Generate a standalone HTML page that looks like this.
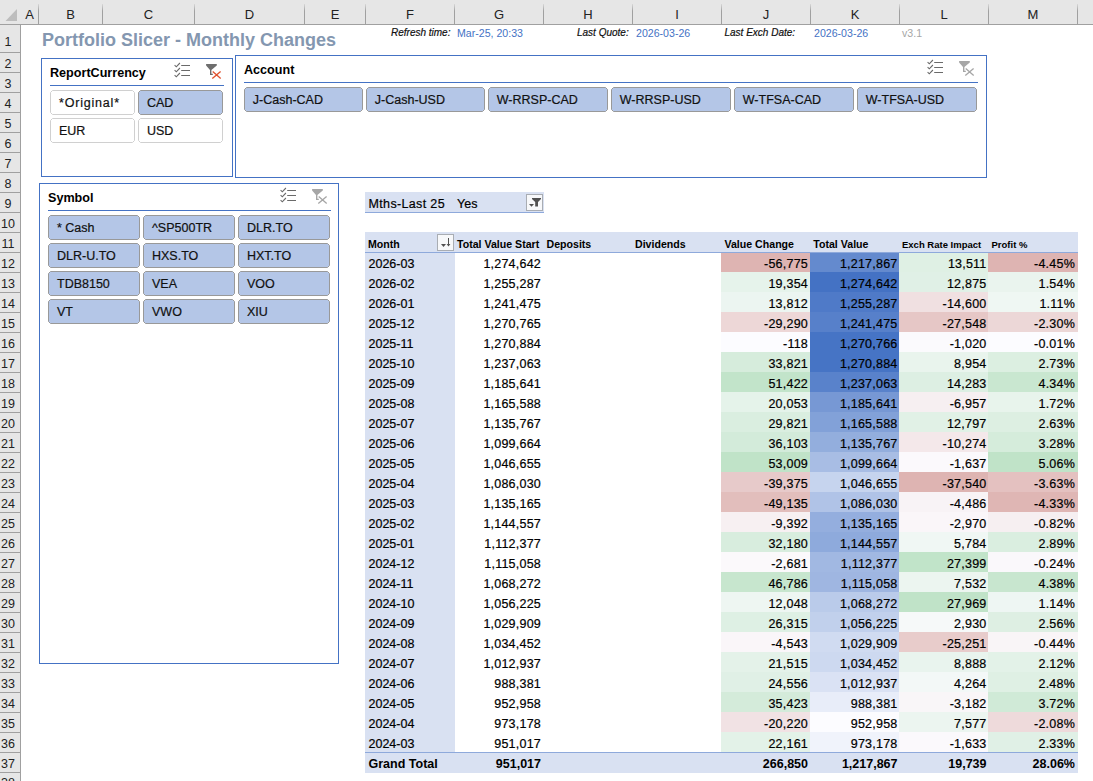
<!DOCTYPE html>
<html><head><meta charset="utf-8"><style>
html,body{margin:0;padding:0;}
body{width:1093px;height:781px;position:relative;overflow:hidden;background:#fff;font-family:"Liberation Sans", sans-serif;}
.t{position:absolute;white-space:nowrap;font-family:"Liberation Sans", sans-serif;}
.n{letter-spacing:0.22px;-webkit-text-stroke:0.2px currentColor;}
.s{-webkit-text-stroke:0.2px currentColor;}
</style></head><body>
<div style="position:absolute;left:0px;top:0px;width:1093px;height:24px;background:#E6E6E6"></div><div style="position:absolute;left:0px;top:24px;width:20px;height:757px;background:#E6E6E6"></div><div style="position:absolute;left:0px;top:24px;width:1093px;height:1px;background:#A0A0A0"></div><div style="position:absolute;left:20px;top:24px;width:1px;height:757px;background:#A0A0A0"></div><svg style="position:absolute;left:0;top:0" width="20" height="24"><polygon points="17,9 17,21 5.5,21" fill="#BDBDBD"/></svg><div style="position:absolute;left:38px;top:4px;width:1px;height:20px;background:linear-gradient(to bottom, #D8D8D8, #A0A0A0 35%)"></div><div style="position:absolute;left:102px;top:4px;width:1px;height:20px;background:linear-gradient(to bottom, #D8D8D8, #A0A0A0 35%)"></div><div style="position:absolute;left:194px;top:4px;width:1px;height:20px;background:linear-gradient(to bottom, #D8D8D8, #A0A0A0 35%)"></div><div style="position:absolute;left:304px;top:4px;width:1px;height:20px;background:linear-gradient(to bottom, #D8D8D8, #A0A0A0 35%)"></div><div style="position:absolute;left:365px;top:4px;width:1px;height:20px;background:linear-gradient(to bottom, #D8D8D8, #A0A0A0 35%)"></div><div style="position:absolute;left:454px;top:4px;width:1px;height:20px;background:linear-gradient(to bottom, #D8D8D8, #A0A0A0 35%)"></div><div style="position:absolute;left:543px;top:4px;width:1px;height:20px;background:linear-gradient(to bottom, #D8D8D8, #A0A0A0 35%)"></div><div style="position:absolute;left:632px;top:4px;width:1px;height:20px;background:linear-gradient(to bottom, #D8D8D8, #A0A0A0 35%)"></div><div style="position:absolute;left:721px;top:4px;width:1px;height:20px;background:linear-gradient(to bottom, #D8D8D8, #A0A0A0 35%)"></div><div style="position:absolute;left:810px;top:4px;width:1px;height:20px;background:linear-gradient(to bottom, #D8D8D8, #A0A0A0 35%)"></div><div style="position:absolute;left:899px;top:4px;width:1px;height:20px;background:linear-gradient(to bottom, #D8D8D8, #A0A0A0 35%)"></div><div style="position:absolute;left:988px;top:4px;width:1px;height:20px;background:linear-gradient(to bottom, #D8D8D8, #A0A0A0 35%)"></div><div style="position:absolute;left:1077px;top:4px;width:1px;height:20px;background:linear-gradient(to bottom, #D8D8D8, #A0A0A0 35%)"></div><div class="t" style="left:21px;width:17px;top:8.00px;font-size:13px;line-height:13px;text-align:center;color:#222">A</div><div class="t" style="left:39px;width:63px;top:8.00px;font-size:13px;line-height:13px;text-align:center;color:#222">B</div><div class="t" style="left:103px;width:91px;top:8.00px;font-size:13px;line-height:13px;text-align:center;color:#222">C</div><div class="t" style="left:195px;width:109px;top:8.00px;font-size:13px;line-height:13px;text-align:center;color:#222">D</div><div class="t" style="left:305px;width:60px;top:8.00px;font-size:13px;line-height:13px;text-align:center;color:#222">E</div><div class="t" style="left:366px;width:88px;top:8.00px;font-size:13px;line-height:13px;text-align:center;color:#222">F</div><div class="t" style="left:455px;width:88px;top:8.00px;font-size:13px;line-height:13px;text-align:center;color:#222">G</div><div class="t" style="left:544px;width:88px;top:8.00px;font-size:13px;line-height:13px;text-align:center;color:#222">H</div><div class="t" style="left:633px;width:88px;top:8.00px;font-size:13px;line-height:13px;text-align:center;color:#222">I</div><div class="t" style="left:722px;width:88px;top:8.00px;font-size:13px;line-height:13px;text-align:center;color:#222">J</div><div class="t" style="left:811px;width:88px;top:8.00px;font-size:13px;line-height:13px;text-align:center;color:#222">K</div><div class="t" style="left:900px;width:88px;top:8.00px;font-size:13px;line-height:13px;text-align:center;color:#222">L</div><div class="t" style="left:989px;width:88px;top:8.00px;font-size:13px;line-height:13px;text-align:center;color:#222">M</div><div style="position:absolute;left:0px;top:52px;width:20px;height:1px;background:#A0A0A0"></div><div style="position:absolute;left:0px;top:72px;width:20px;height:1px;background:#A0A0A0"></div><div style="position:absolute;left:0px;top:92px;width:20px;height:1px;background:#A0A0A0"></div><div style="position:absolute;left:0px;top:112px;width:20px;height:1px;background:#A0A0A0"></div><div style="position:absolute;left:0px;top:132px;width:20px;height:1px;background:#A0A0A0"></div><div style="position:absolute;left:0px;top:152px;width:20px;height:1px;background:#A0A0A0"></div><div style="position:absolute;left:0px;top:172px;width:20px;height:1px;background:#A0A0A0"></div><div style="position:absolute;left:0px;top:192px;width:20px;height:1px;background:#A0A0A0"></div><div style="position:absolute;left:0px;top:212px;width:20px;height:1px;background:#A0A0A0"></div><div style="position:absolute;left:0px;top:232px;width:20px;height:1px;background:#A0A0A0"></div><div style="position:absolute;left:0px;top:252px;width:20px;height:1px;background:#A0A0A0"></div><div style="position:absolute;left:0px;top:272px;width:20px;height:1px;background:#A0A0A0"></div><div style="position:absolute;left:0px;top:292px;width:20px;height:1px;background:#A0A0A0"></div><div style="position:absolute;left:0px;top:312px;width:20px;height:1px;background:#A0A0A0"></div><div style="position:absolute;left:0px;top:332px;width:20px;height:1px;background:#A0A0A0"></div><div style="position:absolute;left:0px;top:352px;width:20px;height:1px;background:#A0A0A0"></div><div style="position:absolute;left:0px;top:372px;width:20px;height:1px;background:#A0A0A0"></div><div style="position:absolute;left:0px;top:392px;width:20px;height:1px;background:#A0A0A0"></div><div style="position:absolute;left:0px;top:412px;width:20px;height:1px;background:#A0A0A0"></div><div style="position:absolute;left:0px;top:432px;width:20px;height:1px;background:#A0A0A0"></div><div style="position:absolute;left:0px;top:452px;width:20px;height:1px;background:#A0A0A0"></div><div style="position:absolute;left:0px;top:472px;width:20px;height:1px;background:#A0A0A0"></div><div style="position:absolute;left:0px;top:492px;width:20px;height:1px;background:#A0A0A0"></div><div style="position:absolute;left:0px;top:512px;width:20px;height:1px;background:#A0A0A0"></div><div style="position:absolute;left:0px;top:532px;width:20px;height:1px;background:#A0A0A0"></div><div style="position:absolute;left:0px;top:552px;width:20px;height:1px;background:#A0A0A0"></div><div style="position:absolute;left:0px;top:572px;width:20px;height:1px;background:#A0A0A0"></div><div style="position:absolute;left:0px;top:592px;width:20px;height:1px;background:#A0A0A0"></div><div style="position:absolute;left:0px;top:612px;width:20px;height:1px;background:#A0A0A0"></div><div style="position:absolute;left:0px;top:632px;width:20px;height:1px;background:#A0A0A0"></div><div style="position:absolute;left:0px;top:652px;width:20px;height:1px;background:#A0A0A0"></div><div style="position:absolute;left:0px;top:672px;width:20px;height:1px;background:#A0A0A0"></div><div style="position:absolute;left:0px;top:692px;width:20px;height:1px;background:#A0A0A0"></div><div style="position:absolute;left:0px;top:712px;width:20px;height:1px;background:#A0A0A0"></div><div style="position:absolute;left:0px;top:732px;width:20px;height:1px;background:#A0A0A0"></div><div style="position:absolute;left:0px;top:752px;width:20px;height:1px;background:#A0A0A0"></div><div style="position:absolute;left:0px;top:772px;width:20px;height:1px;background:#A0A0A0"></div><div class="t" style="left:0px;width:16px;top:35.92px;font-size:12.5px;line-height:12.5px;text-align:center;color:#222">1</div><div class="t" style="left:0px;width:16px;top:58.42px;font-size:12.5px;line-height:12.5px;text-align:center;color:#222">2</div><div class="t" style="left:0px;width:16px;top:78.42px;font-size:12.5px;line-height:12.5px;text-align:center;color:#222">3</div><div class="t" style="left:0px;width:16px;top:98.42px;font-size:12.5px;line-height:12.5px;text-align:center;color:#222">4</div><div class="t" style="left:0px;width:16px;top:118.42px;font-size:12.5px;line-height:12.5px;text-align:center;color:#222">5</div><div class="t" style="left:0px;width:16px;top:138.42px;font-size:12.5px;line-height:12.5px;text-align:center;color:#222">6</div><div class="t" style="left:0px;width:16px;top:158.42px;font-size:12.5px;line-height:12.5px;text-align:center;color:#222">7</div><div class="t" style="left:0px;width:16px;top:178.42px;font-size:12.5px;line-height:12.5px;text-align:center;color:#222">8</div><div class="t" style="left:0px;width:16px;top:198.42px;font-size:12.5px;line-height:12.5px;text-align:center;color:#222">9</div><div class="t" style="left:0px;width:16px;top:218.42px;font-size:12.5px;line-height:12.5px;text-align:center;color:#222">10</div><div class="t" style="left:0px;width:16px;top:238.42px;font-size:12.5px;line-height:12.5px;text-align:center;color:#222">11</div><div class="t" style="left:0px;width:16px;top:258.42px;font-size:12.5px;line-height:12.5px;text-align:center;color:#222">12</div><div class="t" style="left:0px;width:16px;top:278.42px;font-size:12.5px;line-height:12.5px;text-align:center;color:#222">13</div><div class="t" style="left:0px;width:16px;top:298.42px;font-size:12.5px;line-height:12.5px;text-align:center;color:#222">14</div><div class="t" style="left:0px;width:16px;top:318.42px;font-size:12.5px;line-height:12.5px;text-align:center;color:#222">15</div><div class="t" style="left:0px;width:16px;top:338.42px;font-size:12.5px;line-height:12.5px;text-align:center;color:#222">16</div><div class="t" style="left:0px;width:16px;top:358.42px;font-size:12.5px;line-height:12.5px;text-align:center;color:#222">17</div><div class="t" style="left:0px;width:16px;top:378.42px;font-size:12.5px;line-height:12.5px;text-align:center;color:#222">18</div><div class="t" style="left:0px;width:16px;top:398.42px;font-size:12.5px;line-height:12.5px;text-align:center;color:#222">19</div><div class="t" style="left:0px;width:16px;top:418.42px;font-size:12.5px;line-height:12.5px;text-align:center;color:#222">20</div><div class="t" style="left:0px;width:16px;top:438.42px;font-size:12.5px;line-height:12.5px;text-align:center;color:#222">21</div><div class="t" style="left:0px;width:16px;top:458.42px;font-size:12.5px;line-height:12.5px;text-align:center;color:#222">22</div><div class="t" style="left:0px;width:16px;top:478.42px;font-size:12.5px;line-height:12.5px;text-align:center;color:#222">23</div><div class="t" style="left:0px;width:16px;top:498.42px;font-size:12.5px;line-height:12.5px;text-align:center;color:#222">24</div><div class="t" style="left:0px;width:16px;top:518.42px;font-size:12.5px;line-height:12.5px;text-align:center;color:#222">25</div><div class="t" style="left:0px;width:16px;top:538.42px;font-size:12.5px;line-height:12.5px;text-align:center;color:#222">26</div><div class="t" style="left:0px;width:16px;top:558.42px;font-size:12.5px;line-height:12.5px;text-align:center;color:#222">27</div><div class="t" style="left:0px;width:16px;top:578.42px;font-size:12.5px;line-height:12.5px;text-align:center;color:#222">28</div><div class="t" style="left:0px;width:16px;top:598.42px;font-size:12.5px;line-height:12.5px;text-align:center;color:#222">29</div><div class="t" style="left:0px;width:16px;top:618.42px;font-size:12.5px;line-height:12.5px;text-align:center;color:#222">30</div><div class="t" style="left:0px;width:16px;top:638.42px;font-size:12.5px;line-height:12.5px;text-align:center;color:#222">31</div><div class="t" style="left:0px;width:16px;top:658.42px;font-size:12.5px;line-height:12.5px;text-align:center;color:#222">32</div><div class="t" style="left:0px;width:16px;top:678.42px;font-size:12.5px;line-height:12.5px;text-align:center;color:#222">33</div><div class="t" style="left:0px;width:16px;top:698.42px;font-size:12.5px;line-height:12.5px;text-align:center;color:#222">34</div><div class="t" style="left:0px;width:16px;top:718.42px;font-size:12.5px;line-height:12.5px;text-align:center;color:#222">35</div><div class="t" style="left:0px;width:16px;top:738.42px;font-size:12.5px;line-height:12.5px;text-align:center;color:#222">36</div><div class="t" style="left:0px;width:16px;top:758.42px;font-size:12.5px;line-height:12.5px;text-align:center;color:#222">37</div><div class="t" style="left:0px;width:16px;top:777.42px;font-size:12.5px;line-height:12.5px;text-align:center;color:#222">38</div><div class="t " style="left:42px;top:30.76px;font-size:18px;line-height:18px;font-weight:700;color:#8497B0;">Portfolio Slicer - Monthly Changes</div><div class="t s" style="left:391px;top:28.14px;font-size:10px;line-height:10px;font-weight:400;color:#111;font-style:italic">Refresh time:</div><div class="t " style="left:457px;top:27.63px;font-size:10.6px;line-height:10.6px;font-weight:400;color:#4472C4;">Mar-25, 20:33</div><div class="t s" style="left:577px;top:28.14px;font-size:10px;line-height:10px;font-weight:400;color:#111;font-style:italic">Last Quote:</div><div class="t " style="left:636px;top:27.63px;font-size:10.6px;line-height:10.6px;font-weight:400;color:#4472C4;">2026-03-26</div><div class="t s" style="left:724.5px;top:28.14px;font-size:10px;line-height:10px;font-weight:400;color:#111;font-style:italic">Last Exch Date:</div><div class="t " style="left:814px;top:27.63px;font-size:10.6px;line-height:10.6px;font-weight:400;color:#4472C4;">2026-03-26</div><div class="t " style="left:902px;top:27.63px;font-size:10.6px;line-height:10.6px;font-weight:400;color:#A6A6A6;">v3.1</div><div style="position:absolute;left:41px;top:58px;width:190px;height:117px;border:1px solid #4472C4;box-sizing:content-box"></div><div class="t " style="left:50px;top:66.63px;font-size:12.6px;line-height:12.6px;font-weight:700;color:#000;">ReportCurrency</div><div style="position:absolute;left:50px;top:85px;width:174px;height:1px;background:#4472C4"></div><svg style="position:absolute;left:174px;top:62px" width="17" height="17" viewBox="0 0 17 17"><g fill="none" stroke="#6A6A6A" stroke-width="1.1"><path d="M0.6 3.1 L2.3 4.8 L5.9 1.0"/><path d="M0.6 8.1 L2.3 9.8 L5.9 6.0"/><path d="M0.6 13.1 L2.3 14.8 L5.9 11.0"/></g><path d="M7.2 3.5 H16 M7.2 8.5 H16 M7.2 13.5 H16" stroke="#6A6A6A" stroke-width="1"/></svg><svg style="position:absolute;left:205px;top:63px" width="17" height="17" viewBox="0 0 17 17"><path d="M1.1 1 H11.8 V2.4 L6.4 6.9 V10.8 H7.8 V11.9 H5.0 V6.9 L1.1 2.4 Z" fill="#6E6E6E"/><path d="M7.3 15.6 L15.6 8.4 M7.7 8.6 L15.7 15.6" stroke="#E0522F" stroke-width="1.3" fill="none"/></svg><svg style="position:absolute;left:50px;top:90px" width="85" height="25"><path d="M2.5 0.5 H82.5 L84.5 2.5 V22.5 L82.5 24.5 H2.5 L0.5 22.5 V2.5 Z" fill="#FFFFFF" stroke="#D0D0D0" stroke-width="1"/></svg><div class="t s" style="left:59px;top:96.62px;font-size:12.5px;line-height:12.5px;font-weight:400;color:#111;"><span style="letter-spacing:0.8px">*Original*</span></div><svg style="position:absolute;left:138px;top:90px" width="85" height="25"><path d="M2.5 0.5 H82.5 L84.5 2.5 V22.5 L82.5 24.5 H2.5 L0.5 22.5 V2.5 Z" fill="#B4C6E7" stroke="#999999" stroke-width="1"/></svg><div class="t s" style="left:147px;top:96.62px;font-size:12.5px;line-height:12.5px;font-weight:400;color:#111;">CAD</div><svg style="position:absolute;left:50px;top:118px" width="85" height="25"><path d="M2.5 0.5 H82.5 L84.5 2.5 V22.5 L82.5 24.5 H2.5 L0.5 22.5 V2.5 Z" fill="#FFFFFF" stroke="#D0D0D0" stroke-width="1"/></svg><div class="t s" style="left:59px;top:124.62px;font-size:12.5px;line-height:12.5px;font-weight:400;color:#111;">EUR</div><svg style="position:absolute;left:138px;top:118px" width="85" height="25"><path d="M2.5 0.5 H82.5 L84.5 2.5 V22.5 L82.5 24.5 H2.5 L0.5 22.5 V2.5 Z" fill="#FFFFFF" stroke="#D0D0D0" stroke-width="1"/></svg><div class="t s" style="left:147px;top:124.62px;font-size:12.5px;line-height:12.5px;font-weight:400;color:#111;">USD</div><div style="position:absolute;left:235px;top:55px;width:750px;height:121px;border:1px solid #4472C4;box-sizing:content-box"></div><div class="t " style="left:244px;top:64.33px;font-size:12.6px;line-height:12.6px;font-weight:700;color:#000;">Account</div><div style="position:absolute;left:244px;top:82px;width:734px;height:1px;background:#4472C4"></div><svg style="position:absolute;left:927px;top:59px" width="17" height="17" viewBox="0 0 17 17"><g fill="none" stroke="#6A6A6A" stroke-width="1.1"><path d="M0.6 3.1 L2.3 4.8 L5.9 1.0"/><path d="M0.6 8.1 L2.3 9.8 L5.9 6.0"/><path d="M0.6 13.1 L2.3 14.8 L5.9 11.0"/></g><path d="M7.2 3.5 H16 M7.2 8.5 H16 M7.2 13.5 H16" stroke="#6A6A6A" stroke-width="1"/></svg><svg style="position:absolute;left:958px;top:60px" width="17" height="17" viewBox="0 0 17 17"><path d="M1.1 1 H11.8 V2.4 L6.4 6.9 V10.8 H7.8 V11.9 H5.0 V6.9 L1.1 2.4 Z" fill="#A6A6A6"/><path d="M7.3 15.6 L15.6 8.4 M7.7 8.6 L15.7 15.6" stroke="#A6A6A6" stroke-width="1.3" fill="none"/></svg><svg style="position:absolute;left:244px;top:87px" width="119" height="25"><path d="M2.5 0.5 H116.5 L118.5 2.5 V22.5 L116.5 24.5 H2.5 L0.5 22.5 V2.5 Z" fill="#B4C6E7" stroke="#999999" stroke-width="1"/></svg><div class="t s" style="left:252.8px;top:93.62px;font-size:12.5px;line-height:12.5px;font-weight:400;color:#111;">J-Cash-CAD</div><svg style="position:absolute;left:366px;top:87px" width="119" height="25"><path d="M2.5 0.5 H116.5 L118.5 2.5 V22.5 L116.5 24.5 H2.5 L0.5 22.5 V2.5 Z" fill="#B4C6E7" stroke="#999999" stroke-width="1"/></svg><div class="t s" style="left:374.8px;top:93.62px;font-size:12.5px;line-height:12.5px;font-weight:400;color:#111;">J-Cash-USD</div><svg style="position:absolute;left:488px;top:87px" width="120" height="25"><path d="M2.5 0.5 H117.5 L119.5 2.5 V22.5 L117.5 24.5 H2.5 L0.5 22.5 V2.5 Z" fill="#B4C6E7" stroke="#999999" stroke-width="1"/></svg><div class="t s" style="left:496.8px;top:93.62px;font-size:12.5px;line-height:12.5px;font-weight:400;color:#111;">W-RRSP-CAD</div><svg style="position:absolute;left:611px;top:87px" width="120" height="25"><path d="M2.5 0.5 H117.5 L119.5 2.5 V22.5 L117.5 24.5 H2.5 L0.5 22.5 V2.5 Z" fill="#B4C6E7" stroke="#999999" stroke-width="1"/></svg><div class="t s" style="left:619.8px;top:93.62px;font-size:12.5px;line-height:12.5px;font-weight:400;color:#111;">W-RRSP-USD</div><svg style="position:absolute;left:734px;top:87px" width="120" height="25"><path d="M2.5 0.5 H117.5 L119.5 2.5 V22.5 L117.5 24.5 H2.5 L0.5 22.5 V2.5 Z" fill="#B4C6E7" stroke="#999999" stroke-width="1"/></svg><div class="t s" style="left:742.8px;top:93.62px;font-size:12.5px;line-height:12.5px;font-weight:400;color:#111;">W-TFSA-CAD</div><svg style="position:absolute;left:857px;top:87px" width="120" height="25"><path d="M2.5 0.5 H117.5 L119.5 2.5 V22.5 L117.5 24.5 H2.5 L0.5 22.5 V2.5 Z" fill="#B4C6E7" stroke="#999999" stroke-width="1"/></svg><div class="t s" style="left:865.8px;top:93.62px;font-size:12.5px;line-height:12.5px;font-weight:400;color:#111;">W-TFSA-USD</div><div style="position:absolute;left:39px;top:183px;width:298px;height:479px;border:1px solid #4472C4;box-sizing:content-box"></div><div class="t " style="left:48px;top:191.73px;font-size:12.6px;line-height:12.6px;font-weight:700;color:#000;">Symbol</div><div style="position:absolute;left:48px;top:210px;width:283px;height:1px;background:#4472C4"></div><svg style="position:absolute;left:280px;top:187px" width="17" height="17" viewBox="0 0 17 17"><g fill="none" stroke="#6A6A6A" stroke-width="1.1"><path d="M0.6 3.1 L2.3 4.8 L5.9 1.0"/><path d="M0.6 8.1 L2.3 9.8 L5.9 6.0"/><path d="M0.6 13.1 L2.3 14.8 L5.9 11.0"/></g><path d="M7.2 3.5 H16 M7.2 8.5 H16 M7.2 13.5 H16" stroke="#6A6A6A" stroke-width="1"/></svg><svg style="position:absolute;left:311px;top:188px" width="17" height="17" viewBox="0 0 17 17"><path d="M1.1 1 H11.8 V2.4 L6.4 6.9 V10.8 H7.8 V11.9 H5.0 V6.9 L1.1 2.4 Z" fill="#A6A6A6"/><path d="M7.3 15.6 L15.6 8.4 M7.7 8.6 L15.7 15.6" stroke="#A6A6A6" stroke-width="1.3" fill="none"/></svg><svg style="position:absolute;left:48px;top:215px" width="92" height="25"><path d="M2.5 0.5 H89.5 L91.5 2.5 V22.5 L89.5 24.5 H2.5 L0.5 22.5 V2.5 Z" fill="#B4C6E7" stroke="#999999" stroke-width="1"/></svg><div class="t s" style="left:57px;top:221.62px;font-size:12.5px;line-height:12.5px;font-weight:400;color:#111;">* Cash</div><svg style="position:absolute;left:143px;top:215px" width="92" height="25"><path d="M2.5 0.5 H89.5 L91.5 2.5 V22.5 L89.5 24.5 H2.5 L0.5 22.5 V2.5 Z" fill="#B4C6E7" stroke="#999999" stroke-width="1"/></svg><div class="t s" style="left:152px;top:221.62px;font-size:12.5px;line-height:12.5px;font-weight:400;color:#111;">^SP500TR</div><svg style="position:absolute;left:238px;top:215px" width="92" height="25"><path d="M2.5 0.5 H89.5 L91.5 2.5 V22.5 L89.5 24.5 H2.5 L0.5 22.5 V2.5 Z" fill="#B4C6E7" stroke="#999999" stroke-width="1"/></svg><div class="t s" style="left:247px;top:221.62px;font-size:12.5px;line-height:12.5px;font-weight:400;color:#111;">DLR.TO</div><svg style="position:absolute;left:48px;top:243px" width="92" height="25"><path d="M2.5 0.5 H89.5 L91.5 2.5 V22.5 L89.5 24.5 H2.5 L0.5 22.5 V2.5 Z" fill="#B4C6E7" stroke="#999999" stroke-width="1"/></svg><div class="t s" style="left:57px;top:249.62px;font-size:12.5px;line-height:12.5px;font-weight:400;color:#111;">DLR-U.TO</div><svg style="position:absolute;left:143px;top:243px" width="92" height="25"><path d="M2.5 0.5 H89.5 L91.5 2.5 V22.5 L89.5 24.5 H2.5 L0.5 22.5 V2.5 Z" fill="#B4C6E7" stroke="#999999" stroke-width="1"/></svg><div class="t s" style="left:152px;top:249.62px;font-size:12.5px;line-height:12.5px;font-weight:400;color:#111;">HXS.TO</div><svg style="position:absolute;left:238px;top:243px" width="92" height="25"><path d="M2.5 0.5 H89.5 L91.5 2.5 V22.5 L89.5 24.5 H2.5 L0.5 22.5 V2.5 Z" fill="#B4C6E7" stroke="#999999" stroke-width="1"/></svg><div class="t s" style="left:247px;top:249.62px;font-size:12.5px;line-height:12.5px;font-weight:400;color:#111;">HXT.TO</div><svg style="position:absolute;left:48px;top:271px" width="92" height="25"><path d="M2.5 0.5 H89.5 L91.5 2.5 V22.5 L89.5 24.5 H2.5 L0.5 22.5 V2.5 Z" fill="#B4C6E7" stroke="#999999" stroke-width="1"/></svg><div class="t s" style="left:57px;top:277.62px;font-size:12.5px;line-height:12.5px;font-weight:400;color:#111;">TDB8150</div><svg style="position:absolute;left:143px;top:271px" width="92" height="25"><path d="M2.5 0.5 H89.5 L91.5 2.5 V22.5 L89.5 24.5 H2.5 L0.5 22.5 V2.5 Z" fill="#B4C6E7" stroke="#999999" stroke-width="1"/></svg><div class="t s" style="left:152px;top:277.62px;font-size:12.5px;line-height:12.5px;font-weight:400;color:#111;">VEA</div><svg style="position:absolute;left:238px;top:271px" width="92" height="25"><path d="M2.5 0.5 H89.5 L91.5 2.5 V22.5 L89.5 24.5 H2.5 L0.5 22.5 V2.5 Z" fill="#B4C6E7" stroke="#999999" stroke-width="1"/></svg><div class="t s" style="left:247px;top:277.62px;font-size:12.5px;line-height:12.5px;font-weight:400;color:#111;">VOO</div><svg style="position:absolute;left:48px;top:299px" width="92" height="25"><path d="M2.5 0.5 H89.5 L91.5 2.5 V22.5 L89.5 24.5 H2.5 L0.5 22.5 V2.5 Z" fill="#B4C6E7" stroke="#999999" stroke-width="1"/></svg><div class="t s" style="left:57px;top:305.62px;font-size:12.5px;line-height:12.5px;font-weight:400;color:#111;">VT</div><svg style="position:absolute;left:143px;top:299px" width="92" height="25"><path d="M2.5 0.5 H89.5 L91.5 2.5 V22.5 L89.5 24.5 H2.5 L0.5 22.5 V2.5 Z" fill="#B4C6E7" stroke="#999999" stroke-width="1"/></svg><div class="t s" style="left:152px;top:305.62px;font-size:12.5px;line-height:12.5px;font-weight:400;color:#111;">VWO</div><svg style="position:absolute;left:238px;top:299px" width="92" height="25"><path d="M2.5 0.5 H89.5 L91.5 2.5 V22.5 L89.5 24.5 H2.5 L0.5 22.5 V2.5 Z" fill="#B4C6E7" stroke="#999999" stroke-width="1"/></svg><div class="t s" style="left:247px;top:305.62px;font-size:12.5px;line-height:12.5px;font-weight:400;color:#111;">XIU</div><div style="position:absolute;left:365px;top:192px;width:179px;height:20px;background:#D9E1F2"></div><div style="position:absolute;left:365px;top:212px;width:179px;height:1px;background:#8EA9DB"></div><div class="t s" style="left:368.5px;top:198.22px;font-size:12.5px;line-height:12.5px;font-weight:400;color:#000;letter-spacing:0.35px">Mths-Last 25</div><div class="t s" style="left:457px;top:198.22px;font-size:12.5px;line-height:12.5px;font-weight:400;color:#000;">Yes</div><svg style="position:absolute;left:526px;top:194px" width="17" height="17" viewBox="0 0 17 17"><rect x="0.5" y="0.5" width="16" height="16" fill="#F7F8FA" stroke="#A9ADB3"/><path d="M3 10 H8 L5.5 12.8 Z" fill="#505050"/><path d="M6 4 H15 V5 L12 8 V12.5 H9.2 V8 L6 5 Z" fill="#505050"/></svg><div style="position:absolute;left:365px;top:232px;width:713px;height:20px;background:#D9E1F2"></div><div style="position:absolute;left:365px;top:252px;width:713px;height:1px;background:#8EA9DB"></div><svg style="position:absolute;left:437px;top:234px" width="17" height="17" viewBox="0 0 17 17"><rect x="0.5" y="0.5" width="16" height="16" fill="#F7F8FA" stroke="#A9ADB3"/><path d="M4 10 H9 L6.5 13 Z" fill="#505050"/><path d="M11.5 4 V11" stroke="#505050" stroke-width="1"/><path d="M9.6 10 H13.4 L11.5 12.5 Z" fill="#505050"/></svg><div class="t " style="left:368px;top:239.23px;font-size:10.6px;line-height:10.6px;font-weight:700;color:#000;">Month</div><div class="t " style="left:457px;top:239.23px;font-size:10.6px;line-height:10.6px;font-weight:700;color:#000;">Total Value Start</div><div class="t " style="left:546.5px;top:239.23px;font-size:10.6px;line-height:10.6px;font-weight:700;color:#000;">Deposits</div><div class="t " style="left:635px;top:239.23px;font-size:10.6px;line-height:10.6px;font-weight:700;color:#000;">Dividends</div><div class="t " style="left:724.5px;top:239.23px;font-size:10.6px;line-height:10.6px;font-weight:700;color:#000;">Value Change</div><div class="t " style="left:813.3px;top:239.23px;font-size:10.6px;line-height:10.6px;font-weight:700;color:#000;">Total Value</div><div class="t " style="left:902px;top:240.36px;font-size:9.5px;line-height:9.5px;font-weight:700;color:#000;">Exch Rate Impact</div><div class="t " style="left:991.5px;top:240.36px;font-size:9.5px;line-height:9.5px;font-weight:700;color:#000;">Profit %</div><div style="position:absolute;left:365px;top:253px;width:90px;height:19px;background:#D9E1F2"></div><div style="position:absolute;left:721px;top:253px;width:89px;height:19px;background:#DEB4B2"></div><div style="position:absolute;left:810px;top:253px;width:89px;height:19px;background:#648ACE"></div><div style="position:absolute;left:899px;top:253px;width:89px;height:19px;background:#DFF0E4"></div><div style="position:absolute;left:988px;top:253px;width:90px;height:19px;background:#DEB4B2"></div><div class="t s" style="left:368.5px;top:258.22px;font-size:12.5px;line-height:12.5px;font-weight:400;color:#000;">2026-03</div><div class="t n" style="right:552px;top:258.22px;font-size:12.5px;line-height:12.5px;font-weight:400;color:#000;text-align:right;">1,274,642</div><div class="t n" style="right:285px;top:258.22px;font-size:12.5px;line-height:12.5px;font-weight:400;color:#000;text-align:right;">-56,775</div><div class="t n" style="right:195.5px;top:258.22px;font-size:12.5px;line-height:12.5px;font-weight:400;color:#000;text-align:right;">1,217,867</div><div class="t n" style="right:106.5px;top:258.22px;font-size:12.5px;line-height:12.5px;font-weight:400;color:#000;text-align:right;">13,511</div><div class="t n" style="right:18px;top:258.22px;font-size:12.5px;line-height:12.5px;font-weight:400;color:#000;text-align:right;">-4.45%</div><div style="position:absolute;left:365px;top:272px;width:90px;height:20px;background:#D9E1F2"></div><div style="position:absolute;left:721px;top:272px;width:89px;height:20px;background:#E6F3EB"></div><div style="position:absolute;left:810px;top:272px;width:89px;height:20px;background:#4472C4"></div><div style="position:absolute;left:899px;top:272px;width:89px;height:20px;background:#E0F0E6"></div><div style="position:absolute;left:988px;top:272px;width:90px;height:20px;background:#EAF4EE"></div><div class="t s" style="left:368.5px;top:278.22px;font-size:12.5px;line-height:12.5px;font-weight:400;color:#000;">2026-02</div><div class="t n" style="right:552px;top:278.22px;font-size:12.5px;line-height:12.5px;font-weight:400;color:#000;text-align:right;">1,255,287</div><div class="t n" style="right:285px;top:278.22px;font-size:12.5px;line-height:12.5px;font-weight:400;color:#000;text-align:right;">19,354</div><div class="t n" style="right:195.5px;top:278.22px;font-size:12.5px;line-height:12.5px;font-weight:400;color:#000;text-align:right;">1,274,642</div><div class="t n" style="right:106.5px;top:278.22px;font-size:12.5px;line-height:12.5px;font-weight:400;color:#000;text-align:right;">12,875</div><div class="t n" style="right:18px;top:278.22px;font-size:12.5px;line-height:12.5px;font-weight:400;color:#000;text-align:right;">1.54%</div><div style="position:absolute;left:365px;top:292px;width:90px;height:20px;background:#D9E1F2"></div><div style="position:absolute;left:721px;top:292px;width:89px;height:20px;background:#ECF5F1"></div><div style="position:absolute;left:810px;top:292px;width:89px;height:20px;background:#4F7AC8"></div><div style="position:absolute;left:899px;top:292px;width:89px;height:20px;background:#F0E0E1"></div><div style="position:absolute;left:988px;top:292px;width:90px;height:20px;background:#EFF7F3"></div><div class="t s" style="left:368.5px;top:298.22px;font-size:12.5px;line-height:12.5px;font-weight:400;color:#000;">2026-01</div><div class="t n" style="right:552px;top:298.22px;font-size:12.5px;line-height:12.5px;font-weight:400;color:#000;text-align:right;">1,241,475</div><div class="t n" style="right:285px;top:298.22px;font-size:12.5px;line-height:12.5px;font-weight:400;color:#000;text-align:right;">13,812</div><div class="t n" style="right:195.5px;top:298.22px;font-size:12.5px;line-height:12.5px;font-weight:400;color:#000;text-align:right;">1,255,287</div><div class="t n" style="right:106.5px;top:298.22px;font-size:12.5px;line-height:12.5px;font-weight:400;color:#000;text-align:right;">-14,600</div><div class="t n" style="right:18px;top:298.22px;font-size:12.5px;line-height:12.5px;font-weight:400;color:#000;text-align:right;">1.11%</div><div style="position:absolute;left:365px;top:312px;width:90px;height:20px;background:#D9E1F2"></div><div style="position:absolute;left:721px;top:312px;width:89px;height:20px;background:#EDD7D7"></div><div style="position:absolute;left:810px;top:312px;width:89px;height:20px;background:#5780CA"></div><div style="position:absolute;left:899px;top:312px;width:89px;height:20px;background:#E6C7C6"></div><div style="position:absolute;left:988px;top:312px;width:90px;height:20px;background:#ECD7D7"></div><div class="t s" style="left:368.5px;top:318.22px;font-size:12.5px;line-height:12.5px;font-weight:400;color:#000;">2025-12</div><div class="t n" style="right:552px;top:318.22px;font-size:12.5px;line-height:12.5px;font-weight:400;color:#000;text-align:right;">1,270,765</div><div class="t n" style="right:285px;top:318.22px;font-size:12.5px;line-height:12.5px;font-weight:400;color:#000;text-align:right;">-29,290</div><div class="t n" style="right:195.5px;top:318.22px;font-size:12.5px;line-height:12.5px;font-weight:400;color:#000;text-align:right;">1,241,475</div><div class="t n" style="right:106.5px;top:318.22px;font-size:12.5px;line-height:12.5px;font-weight:400;color:#000;text-align:right;">-27,548</div><div class="t n" style="right:18px;top:318.22px;font-size:12.5px;line-height:12.5px;font-weight:400;color:#000;text-align:right;">-2.30%</div><div style="position:absolute;left:365px;top:332px;width:90px;height:20px;background:#D9E1F2"></div><div style="position:absolute;left:721px;top:332px;width:89px;height:20px;background:#FCFCFF"></div><div style="position:absolute;left:810px;top:332px;width:89px;height:20px;background:#4674C5"></div><div style="position:absolute;left:899px;top:332px;width:89px;height:20px;background:#FBFAFD"></div><div style="position:absolute;left:988px;top:332px;width:90px;height:20px;background:#FCFCFF"></div><div class="t s" style="left:368.5px;top:338.22px;font-size:12.5px;line-height:12.5px;font-weight:400;color:#000;">2025-11</div><div class="t n" style="right:552px;top:338.22px;font-size:12.5px;line-height:12.5px;font-weight:400;color:#000;text-align:right;">1,270,884</div><div class="t n" style="right:285px;top:338.22px;font-size:12.5px;line-height:12.5px;font-weight:400;color:#000;text-align:right;">-118</div><div class="t n" style="right:195.5px;top:338.22px;font-size:12.5px;line-height:12.5px;font-weight:400;color:#000;text-align:right;">1,270,766</div><div class="t n" style="right:106.5px;top:338.22px;font-size:12.5px;line-height:12.5px;font-weight:400;color:#000;text-align:right;">-1,020</div><div class="t n" style="right:18px;top:338.22px;font-size:12.5px;line-height:12.5px;font-weight:400;color:#000;text-align:right;">-0.01%</div><div style="position:absolute;left:365px;top:352px;width:90px;height:20px;background:#D9E1F2"></div><div style="position:absolute;left:721px;top:352px;width:89px;height:20px;background:#D6ECDC"></div><div style="position:absolute;left:810px;top:352px;width:89px;height:20px;background:#4674C5"></div><div style="position:absolute;left:899px;top:352px;width:89px;height:20px;background:#E9F4ED"></div><div style="position:absolute;left:988px;top:352px;width:90px;height:20px;background:#DCEFE1"></div><div class="t s" style="left:368.5px;top:358.22px;font-size:12.5px;line-height:12.5px;font-weight:400;color:#000;">2025-10</div><div class="t n" style="right:552px;top:358.22px;font-size:12.5px;line-height:12.5px;font-weight:400;color:#000;text-align:right;">1,237,063</div><div class="t n" style="right:285px;top:358.22px;font-size:12.5px;line-height:12.5px;font-weight:400;color:#000;text-align:right;">33,821</div><div class="t n" style="right:195.5px;top:358.22px;font-size:12.5px;line-height:12.5px;font-weight:400;color:#000;text-align:right;">1,270,884</div><div class="t n" style="right:106.5px;top:358.22px;font-size:12.5px;line-height:12.5px;font-weight:400;color:#000;text-align:right;">8,954</div><div class="t n" style="right:18px;top:358.22px;font-size:12.5px;line-height:12.5px;font-weight:400;color:#000;text-align:right;">2.73%</div><div style="position:absolute;left:365px;top:372px;width:90px;height:20px;background:#D9E1F2"></div><div style="position:absolute;left:721px;top:372px;width:89px;height:20px;background:#C2E4CA"></div><div style="position:absolute;left:810px;top:372px;width:89px;height:20px;background:#5982CB"></div><div style="position:absolute;left:899px;top:372px;width:89px;height:20px;background:#DDEFE3"></div><div style="position:absolute;left:988px;top:372px;width:90px;height:20px;background:#C9E7D0"></div><div class="t s" style="left:368.5px;top:378.22px;font-size:12.5px;line-height:12.5px;font-weight:400;color:#000;">2025-09</div><div class="t n" style="right:552px;top:378.22px;font-size:12.5px;line-height:12.5px;font-weight:400;color:#000;text-align:right;">1,185,641</div><div class="t n" style="right:285px;top:378.22px;font-size:12.5px;line-height:12.5px;font-weight:400;color:#000;text-align:right;">51,422</div><div class="t n" style="right:195.5px;top:378.22px;font-size:12.5px;line-height:12.5px;font-weight:400;color:#000;text-align:right;">1,237,063</div><div class="t n" style="right:106.5px;top:378.22px;font-size:12.5px;line-height:12.5px;font-weight:400;color:#000;text-align:right;">14,283</div><div class="t n" style="right:18px;top:378.22px;font-size:12.5px;line-height:12.5px;font-weight:400;color:#000;text-align:right;">4.34%</div><div style="position:absolute;left:365px;top:392px;width:90px;height:20px;background:#D9E1F2"></div><div style="position:absolute;left:721px;top:392px;width:89px;height:20px;background:#E5F3EA"></div><div style="position:absolute;left:810px;top:392px;width:89px;height:20px;background:#7798D4"></div><div style="position:absolute;left:899px;top:392px;width:89px;height:20px;background:#F6EFF1"></div><div style="position:absolute;left:988px;top:392px;width:90px;height:20px;background:#E8F4EC"></div><div class="t s" style="left:368.5px;top:398.22px;font-size:12.5px;line-height:12.5px;font-weight:400;color:#000;">2025-08</div><div class="t n" style="right:552px;top:398.22px;font-size:12.5px;line-height:12.5px;font-weight:400;color:#000;text-align:right;">1,165,588</div><div class="t n" style="right:285px;top:398.22px;font-size:12.5px;line-height:12.5px;font-weight:400;color:#000;text-align:right;">20,053</div><div class="t n" style="right:195.5px;top:398.22px;font-size:12.5px;line-height:12.5px;font-weight:400;color:#000;text-align:right;">1,185,641</div><div class="t n" style="right:106.5px;top:398.22px;font-size:12.5px;line-height:12.5px;font-weight:400;color:#000;text-align:right;">-6,957</div><div class="t n" style="right:18px;top:398.22px;font-size:12.5px;line-height:12.5px;font-weight:400;color:#000;text-align:right;">1.72%</div><div style="position:absolute;left:365px;top:412px;width:90px;height:20px;background:#D9E1F2"></div><div style="position:absolute;left:721px;top:412px;width:89px;height:20px;background:#DAEEE0"></div><div style="position:absolute;left:810px;top:412px;width:89px;height:20px;background:#82A1D8"></div><div style="position:absolute;left:899px;top:412px;width:89px;height:20px;background:#E1F1E6"></div><div style="position:absolute;left:988px;top:412px;width:90px;height:20px;background:#DDEFE2"></div><div class="t s" style="left:368.5px;top:418.22px;font-size:12.5px;line-height:12.5px;font-weight:400;color:#000;">2025-07</div><div class="t n" style="right:552px;top:418.22px;font-size:12.5px;line-height:12.5px;font-weight:400;color:#000;text-align:right;">1,135,767</div><div class="t n" style="right:285px;top:418.22px;font-size:12.5px;line-height:12.5px;font-weight:400;color:#000;text-align:right;">29,821</div><div class="t n" style="right:195.5px;top:418.22px;font-size:12.5px;line-height:12.5px;font-weight:400;color:#000;text-align:right;">1,165,588</div><div class="t n" style="right:106.5px;top:418.22px;font-size:12.5px;line-height:12.5px;font-weight:400;color:#000;text-align:right;">12,797</div><div class="t n" style="right:18px;top:418.22px;font-size:12.5px;line-height:12.5px;font-weight:400;color:#000;text-align:right;">2.63%</div><div style="position:absolute;left:365px;top:432px;width:90px;height:20px;background:#D9E1F2"></div><div style="position:absolute;left:721px;top:432px;width:89px;height:20px;background:#D3EBDA"></div><div style="position:absolute;left:810px;top:432px;width:89px;height:20px;background:#93AEDD"></div><div style="position:absolute;left:899px;top:432px;width:89px;height:20px;background:#F4E8EA"></div><div style="position:absolute;left:988px;top:432px;width:90px;height:20px;background:#D5ECDB"></div><div class="t s" style="left:368.5px;top:438.22px;font-size:12.5px;line-height:12.5px;font-weight:400;color:#000;">2025-06</div><div class="t n" style="right:552px;top:438.22px;font-size:12.5px;line-height:12.5px;font-weight:400;color:#000;text-align:right;">1,099,664</div><div class="t n" style="right:285px;top:438.22px;font-size:12.5px;line-height:12.5px;font-weight:400;color:#000;text-align:right;">36,103</div><div class="t n" style="right:195.5px;top:438.22px;font-size:12.5px;line-height:12.5px;font-weight:400;color:#000;text-align:right;">1,135,767</div><div class="t n" style="right:106.5px;top:438.22px;font-size:12.5px;line-height:12.5px;font-weight:400;color:#000;text-align:right;">-10,274</div><div class="t n" style="right:18px;top:438.22px;font-size:12.5px;line-height:12.5px;font-weight:400;color:#000;text-align:right;">3.28%</div><div style="position:absolute;left:365px;top:452px;width:90px;height:20px;background:#D9E1F2"></div><div style="position:absolute;left:721px;top:452px;width:89px;height:20px;background:#C0E3C8"></div><div style="position:absolute;left:810px;top:452px;width:89px;height:20px;background:#A8BDE4"></div><div style="position:absolute;left:899px;top:452px;width:89px;height:20px;background:#FBF9FC"></div><div style="position:absolute;left:988px;top:452px;width:90px;height:20px;background:#C0E3C8"></div><div class="t s" style="left:368.5px;top:458.22px;font-size:12.5px;line-height:12.5px;font-weight:400;color:#000;">2025-05</div><div class="t n" style="right:552px;top:458.22px;font-size:12.5px;line-height:12.5px;font-weight:400;color:#000;text-align:right;">1,046,655</div><div class="t n" style="right:285px;top:458.22px;font-size:12.5px;line-height:12.5px;font-weight:400;color:#000;text-align:right;">53,009</div><div class="t n" style="right:195.5px;top:458.22px;font-size:12.5px;line-height:12.5px;font-weight:400;color:#000;text-align:right;">1,099,664</div><div class="t n" style="right:106.5px;top:458.22px;font-size:12.5px;line-height:12.5px;font-weight:400;color:#000;text-align:right;">-1,637</div><div class="t n" style="right:18px;top:458.22px;font-size:12.5px;line-height:12.5px;font-weight:400;color:#000;text-align:right;">5.06%</div><div style="position:absolute;left:365px;top:472px;width:90px;height:20px;background:#D9E1F2"></div><div style="position:absolute;left:721px;top:472px;width:89px;height:20px;background:#E7CACA"></div><div style="position:absolute;left:810px;top:472px;width:89px;height:20px;background:#C6D4EE"></div><div style="position:absolute;left:899px;top:472px;width:89px;height:20px;background:#DEB4B2"></div><div style="position:absolute;left:988px;top:472px;width:90px;height:20px;background:#E4C1C0"></div><div class="t s" style="left:368.5px;top:478.22px;font-size:12.5px;line-height:12.5px;font-weight:400;color:#000;">2025-04</div><div class="t n" style="right:552px;top:478.22px;font-size:12.5px;line-height:12.5px;font-weight:400;color:#000;text-align:right;">1,086,030</div><div class="t n" style="right:285px;top:478.22px;font-size:12.5px;line-height:12.5px;font-weight:400;color:#000;text-align:right;">-39,375</div><div class="t n" style="right:195.5px;top:478.22px;font-size:12.5px;line-height:12.5px;font-weight:400;color:#000;text-align:right;">1,046,655</div><div class="t n" style="right:106.5px;top:478.22px;font-size:12.5px;line-height:12.5px;font-weight:400;color:#000;text-align:right;">-37,540</div><div class="t n" style="right:18px;top:478.22px;font-size:12.5px;line-height:12.5px;font-weight:400;color:#000;text-align:right;">-3.63%</div><div style="position:absolute;left:365px;top:492px;width:90px;height:20px;background:#D9E1F2"></div><div style="position:absolute;left:721px;top:492px;width:89px;height:20px;background:#E2BEBC"></div><div style="position:absolute;left:810px;top:492px;width:89px;height:20px;background:#B0C3E7"></div><div style="position:absolute;left:899px;top:492px;width:89px;height:20px;background:#F8F3F6"></div><div style="position:absolute;left:988px;top:492px;width:90px;height:20px;background:#DFB6B4"></div><div class="t s" style="left:368.5px;top:498.22px;font-size:12.5px;line-height:12.5px;font-weight:400;color:#000;">2025-03</div><div class="t n" style="right:552px;top:498.22px;font-size:12.5px;line-height:12.5px;font-weight:400;color:#000;text-align:right;">1,135,165</div><div class="t n" style="right:285px;top:498.22px;font-size:12.5px;line-height:12.5px;font-weight:400;color:#000;text-align:right;">-49,135</div><div class="t n" style="right:195.5px;top:498.22px;font-size:12.5px;line-height:12.5px;font-weight:400;color:#000;text-align:right;">1,086,030</div><div class="t n" style="right:106.5px;top:498.22px;font-size:12.5px;line-height:12.5px;font-weight:400;color:#000;text-align:right;">-4,486</div><div class="t n" style="right:18px;top:498.22px;font-size:12.5px;line-height:12.5px;font-weight:400;color:#000;text-align:right;">-4.33%</div><div style="position:absolute;left:365px;top:512px;width:90px;height:20px;background:#D9E1F2"></div><div style="position:absolute;left:721px;top:512px;width:89px;height:20px;background:#F7F0F2"></div><div style="position:absolute;left:810px;top:512px;width:89px;height:20px;background:#94AEDE"></div><div style="position:absolute;left:899px;top:512px;width:89px;height:20px;background:#FAF6F9"></div><div style="position:absolute;left:988px;top:512px;width:90px;height:20px;background:#F6EFF1"></div><div class="t s" style="left:368.5px;top:518.22px;font-size:12.5px;line-height:12.5px;font-weight:400;color:#000;">2025-02</div><div class="t n" style="right:552px;top:518.22px;font-size:12.5px;line-height:12.5px;font-weight:400;color:#000;text-align:right;">1,144,557</div><div class="t n" style="right:285px;top:518.22px;font-size:12.5px;line-height:12.5px;font-weight:400;color:#000;text-align:right;">-9,392</div><div class="t n" style="right:195.5px;top:518.22px;font-size:12.5px;line-height:12.5px;font-weight:400;color:#000;text-align:right;">1,135,165</div><div class="t n" style="right:106.5px;top:518.22px;font-size:12.5px;line-height:12.5px;font-weight:400;color:#000;text-align:right;">-2,970</div><div class="t n" style="right:18px;top:518.22px;font-size:12.5px;line-height:12.5px;font-weight:400;color:#000;text-align:right;">-0.82%</div><div style="position:absolute;left:365px;top:532px;width:90px;height:20px;background:#D9E1F2"></div><div style="position:absolute;left:721px;top:532px;width:89px;height:20px;background:#D8EDDE"></div><div style="position:absolute;left:810px;top:532px;width:89px;height:20px;background:#8EAADC"></div><div style="position:absolute;left:899px;top:532px;width:89px;height:20px;background:#F0F7F4"></div><div style="position:absolute;left:988px;top:532px;width:90px;height:20px;background:#DAEEE0"></div><div class="t s" style="left:368.5px;top:538.22px;font-size:12.5px;line-height:12.5px;font-weight:400;color:#000;">2025-01</div><div class="t n" style="right:552px;top:538.22px;font-size:12.5px;line-height:12.5px;font-weight:400;color:#000;text-align:right;">1,112,377</div><div class="t n" style="right:285px;top:538.22px;font-size:12.5px;line-height:12.5px;font-weight:400;color:#000;text-align:right;">32,180</div><div class="t n" style="right:195.5px;top:538.22px;font-size:12.5px;line-height:12.5px;font-weight:400;color:#000;text-align:right;">1,144,557</div><div class="t n" style="right:106.5px;top:538.22px;font-size:12.5px;line-height:12.5px;font-weight:400;color:#000;text-align:right;">5,784</div><div class="t n" style="right:18px;top:538.22px;font-size:12.5px;line-height:12.5px;font-weight:400;color:#000;text-align:right;">2.89%</div><div style="position:absolute;left:365px;top:552px;width:90px;height:20px;background:#D9E1F2"></div><div style="position:absolute;left:721px;top:552px;width:89px;height:20px;background:#FBF9FB"></div><div style="position:absolute;left:810px;top:552px;width:89px;height:20px;background:#A1B8E2"></div><div style="position:absolute;left:899px;top:552px;width:89px;height:20px;background:#C1E4C9"></div><div style="position:absolute;left:988px;top:552px;width:90px;height:20px;background:#FAF8FB"></div><div class="t s" style="left:368.5px;top:558.22px;font-size:12.5px;line-height:12.5px;font-weight:400;color:#000;">2024-12</div><div class="t n" style="right:552px;top:558.22px;font-size:12.5px;line-height:12.5px;font-weight:400;color:#000;text-align:right;">1,115,058</div><div class="t n" style="right:285px;top:558.22px;font-size:12.5px;line-height:12.5px;font-weight:400;color:#000;text-align:right;">-2,681</div><div class="t n" style="right:195.5px;top:558.22px;font-size:12.5px;line-height:12.5px;font-weight:400;color:#000;text-align:right;">1,112,377</div><div class="t n" style="right:106.5px;top:558.22px;font-size:12.5px;line-height:12.5px;font-weight:400;color:#000;text-align:right;">27,399</div><div class="t n" style="right:18px;top:558.22px;font-size:12.5px;line-height:12.5px;font-weight:400;color:#000;text-align:right;">-0.24%</div><div style="position:absolute;left:365px;top:572px;width:90px;height:20px;background:#D9E1F2"></div><div style="position:absolute;left:721px;top:572px;width:89px;height:20px;background:#C7E6CE"></div><div style="position:absolute;left:810px;top:572px;width:89px;height:20px;background:#9FB6E1"></div><div style="position:absolute;left:899px;top:572px;width:89px;height:20px;background:#ECF5F0"></div><div style="position:absolute;left:988px;top:572px;width:90px;height:20px;background:#C8E6CF"></div><div class="t s" style="left:368.5px;top:578.22px;font-size:12.5px;line-height:12.5px;font-weight:400;color:#000;">2024-11</div><div class="t n" style="right:552px;top:578.22px;font-size:12.5px;line-height:12.5px;font-weight:400;color:#000;text-align:right;">1,068,272</div><div class="t n" style="right:285px;top:578.22px;font-size:12.5px;line-height:12.5px;font-weight:400;color:#000;text-align:right;">46,786</div><div class="t n" style="right:195.5px;top:578.22px;font-size:12.5px;line-height:12.5px;font-weight:400;color:#000;text-align:right;">1,115,058</div><div class="t n" style="right:106.5px;top:578.22px;font-size:12.5px;line-height:12.5px;font-weight:400;color:#000;text-align:right;">7,532</div><div class="t n" style="right:18px;top:578.22px;font-size:12.5px;line-height:12.5px;font-weight:400;color:#000;text-align:right;">4.38%</div><div style="position:absolute;left:365px;top:592px;width:90px;height:20px;background:#D9E1F2"></div><div style="position:absolute;left:721px;top:592px;width:89px;height:20px;background:#EEF6F2"></div><div style="position:absolute;left:810px;top:592px;width:89px;height:20px;background:#BACBEA"></div><div style="position:absolute;left:899px;top:592px;width:89px;height:20px;background:#C0E3C8"></div><div style="position:absolute;left:988px;top:592px;width:90px;height:20px;background:#EEF6F3"></div><div class="t s" style="left:368.5px;top:598.22px;font-size:12.5px;line-height:12.5px;font-weight:400;color:#000;">2024-10</div><div class="t n" style="right:552px;top:598.22px;font-size:12.5px;line-height:12.5px;font-weight:400;color:#000;text-align:right;">1,056,225</div><div class="t n" style="right:285px;top:598.22px;font-size:12.5px;line-height:12.5px;font-weight:400;color:#000;text-align:right;">12,048</div><div class="t n" style="right:195.5px;top:598.22px;font-size:12.5px;line-height:12.5px;font-weight:400;color:#000;text-align:right;">1,068,272</div><div class="t n" style="right:106.5px;top:598.22px;font-size:12.5px;line-height:12.5px;font-weight:400;color:#000;text-align:right;">27,969</div><div class="t n" style="right:18px;top:598.22px;font-size:12.5px;line-height:12.5px;font-weight:400;color:#000;text-align:right;">1.14%</div><div style="position:absolute;left:365px;top:612px;width:90px;height:20px;background:#D9E1F2"></div><div style="position:absolute;left:721px;top:612px;width:89px;height:20px;background:#DEF0E4"></div><div style="position:absolute;left:810px;top:612px;width:89px;height:20px;background:#C1D0EC"></div><div style="position:absolute;left:899px;top:612px;width:89px;height:20px;background:#F6F9F9"></div><div style="position:absolute;left:988px;top:612px;width:90px;height:20px;background:#DEEFE3"></div><div class="t s" style="left:368.5px;top:618.22px;font-size:12.5px;line-height:12.5px;font-weight:400;color:#000;">2024-09</div><div class="t n" style="right:552px;top:618.22px;font-size:12.5px;line-height:12.5px;font-weight:400;color:#000;text-align:right;">1,029,909</div><div class="t n" style="right:285px;top:618.22px;font-size:12.5px;line-height:12.5px;font-weight:400;color:#000;text-align:right;">26,315</div><div class="t n" style="right:195.5px;top:618.22px;font-size:12.5px;line-height:12.5px;font-weight:400;color:#000;text-align:right;">1,056,225</div><div class="t n" style="right:106.5px;top:618.22px;font-size:12.5px;line-height:12.5px;font-weight:400;color:#000;text-align:right;">2,930</div><div class="t n" style="right:18px;top:618.22px;font-size:12.5px;line-height:12.5px;font-weight:400;color:#000;text-align:right;">2.56%</div><div style="position:absolute;left:365px;top:632px;width:90px;height:20px;background:#D9E1F2"></div><div style="position:absolute;left:721px;top:632px;width:89px;height:20px;background:#FAF6F9"></div><div style="position:absolute;left:810px;top:632px;width:89px;height:20px;background:#D0DBF1"></div><div style="position:absolute;left:899px;top:632px;width:89px;height:20px;background:#E8CCCB"></div><div style="position:absolute;left:988px;top:632px;width:90px;height:20px;background:#F9F5F7"></div><div class="t s" style="left:368.5px;top:638.22px;font-size:12.5px;line-height:12.5px;font-weight:400;color:#000;">2024-08</div><div class="t n" style="right:552px;top:638.22px;font-size:12.5px;line-height:12.5px;font-weight:400;color:#000;text-align:right;">1,034,452</div><div class="t n" style="right:285px;top:638.22px;font-size:12.5px;line-height:12.5px;font-weight:400;color:#000;text-align:right;">-4,543</div><div class="t n" style="right:195.5px;top:638.22px;font-size:12.5px;line-height:12.5px;font-weight:400;color:#000;text-align:right;">1,029,909</div><div class="t n" style="right:106.5px;top:638.22px;font-size:12.5px;line-height:12.5px;font-weight:400;color:#000;text-align:right;">-25,251</div><div class="t n" style="right:18px;top:638.22px;font-size:12.5px;line-height:12.5px;font-weight:400;color:#000;text-align:right;">-0.44%</div><div style="position:absolute;left:365px;top:652px;width:90px;height:20px;background:#D9E1F2"></div><div style="position:absolute;left:721px;top:652px;width:89px;height:20px;background:#E4F2E9"></div><div style="position:absolute;left:810px;top:652px;width:89px;height:20px;background:#CDD9F0"></div><div style="position:absolute;left:899px;top:652px;width:89px;height:20px;background:#E9F4EE"></div><div style="position:absolute;left:988px;top:652px;width:90px;height:20px;background:#E3F2E8"></div><div class="t s" style="left:368.5px;top:658.22px;font-size:12.5px;line-height:12.5px;font-weight:400;color:#000;">2024-07</div><div class="t n" style="right:552px;top:658.22px;font-size:12.5px;line-height:12.5px;font-weight:400;color:#000;text-align:right;">1,012,937</div><div class="t n" style="right:285px;top:658.22px;font-size:12.5px;line-height:12.5px;font-weight:400;color:#000;text-align:right;">21,515</div><div class="t n" style="right:195.5px;top:658.22px;font-size:12.5px;line-height:12.5px;font-weight:400;color:#000;text-align:right;">1,034,452</div><div class="t n" style="right:106.5px;top:658.22px;font-size:12.5px;line-height:12.5px;font-weight:400;color:#000;text-align:right;">8,888</div><div class="t n" style="right:18px;top:658.22px;font-size:12.5px;line-height:12.5px;font-weight:400;color:#000;text-align:right;">2.12%</div><div style="position:absolute;left:365px;top:672px;width:90px;height:20px;background:#D9E1F2"></div><div style="position:absolute;left:721px;top:672px;width:89px;height:20px;background:#E0F0E6"></div><div style="position:absolute;left:810px;top:672px;width:89px;height:20px;background:#DAE2F4"></div><div style="position:absolute;left:899px;top:672px;width:89px;height:20px;background:#F3F8F7"></div><div style="position:absolute;left:988px;top:672px;width:90px;height:20px;background:#DFF0E4"></div><div class="t s" style="left:368.5px;top:678.22px;font-size:12.5px;line-height:12.5px;font-weight:400;color:#000;">2024-06</div><div class="t n" style="right:552px;top:678.22px;font-size:12.5px;line-height:12.5px;font-weight:400;color:#000;text-align:right;">988,381</div><div class="t n" style="right:285px;top:678.22px;font-size:12.5px;line-height:12.5px;font-weight:400;color:#000;text-align:right;">24,556</div><div class="t n" style="right:195.5px;top:678.22px;font-size:12.5px;line-height:12.5px;font-weight:400;color:#000;text-align:right;">1,012,937</div><div class="t n" style="right:106.5px;top:678.22px;font-size:12.5px;line-height:12.5px;font-weight:400;color:#000;text-align:right;">4,264</div><div class="t n" style="right:18px;top:678.22px;font-size:12.5px;line-height:12.5px;font-weight:400;color:#000;text-align:right;">2.48%</div><div style="position:absolute;left:365px;top:692px;width:90px;height:20px;background:#D9E1F2"></div><div style="position:absolute;left:721px;top:692px;width:89px;height:20px;background:#D4EBDA"></div><div style="position:absolute;left:810px;top:692px;width:89px;height:20px;background:#E8EDF9"></div><div style="position:absolute;left:899px;top:692px;width:89px;height:20px;background:#F9F6F8"></div><div style="position:absolute;left:988px;top:692px;width:90px;height:20px;background:#D0EAD7"></div><div class="t s" style="left:368.5px;top:698.22px;font-size:12.5px;line-height:12.5px;font-weight:400;color:#000;">2024-05</div><div class="t n" style="right:552px;top:698.22px;font-size:12.5px;line-height:12.5px;font-weight:400;color:#000;text-align:right;">952,958</div><div class="t n" style="right:285px;top:698.22px;font-size:12.5px;line-height:12.5px;font-weight:400;color:#000;text-align:right;">35,423</div><div class="t n" style="right:195.5px;top:698.22px;font-size:12.5px;line-height:12.5px;font-weight:400;color:#000;text-align:right;">988,381</div><div class="t n" style="right:106.5px;top:698.22px;font-size:12.5px;line-height:12.5px;font-weight:400;color:#000;text-align:right;">-3,182</div><div class="t n" style="right:18px;top:698.22px;font-size:12.5px;line-height:12.5px;font-weight:400;color:#000;text-align:right;">3.72%</div><div style="position:absolute;left:365px;top:712px;width:90px;height:20px;background:#D9E1F2"></div><div style="position:absolute;left:721px;top:712px;width:89px;height:20px;background:#F1E2E4"></div><div style="position:absolute;left:810px;top:712px;width:89px;height:20px;background:#FCFCFF"></div><div style="position:absolute;left:899px;top:712px;width:89px;height:20px;background:#ECF5F0"></div><div style="position:absolute;left:988px;top:712px;width:90px;height:20px;background:#EEDADB"></div><div class="t s" style="left:368.5px;top:718.22px;font-size:12.5px;line-height:12.5px;font-weight:400;color:#000;">2024-04</div><div class="t n" style="right:552px;top:718.22px;font-size:12.5px;line-height:12.5px;font-weight:400;color:#000;text-align:right;">973,178</div><div class="t n" style="right:285px;top:718.22px;font-size:12.5px;line-height:12.5px;font-weight:400;color:#000;text-align:right;">-20,220</div><div class="t n" style="right:195.5px;top:718.22px;font-size:12.5px;line-height:12.5px;font-weight:400;color:#000;text-align:right;">952,958</div><div class="t n" style="right:106.5px;top:718.22px;font-size:12.5px;line-height:12.5px;font-weight:400;color:#000;text-align:right;">7,577</div><div class="t n" style="right:18px;top:718.22px;font-size:12.5px;line-height:12.5px;font-weight:400;color:#000;text-align:right;">-2.08%</div><div style="position:absolute;left:365px;top:732px;width:90px;height:20px;background:#D9E1F2"></div><div style="position:absolute;left:721px;top:732px;width:89px;height:20px;background:#E3F2E8"></div><div style="position:absolute;left:810px;top:732px;width:89px;height:20px;background:#F0F3FB"></div><div style="position:absolute;left:899px;top:732px;width:89px;height:20px;background:#FBF9FC"></div><div style="position:absolute;left:988px;top:732px;width:90px;height:20px;background:#E0F0E6"></div><div class="t s" style="left:368.5px;top:738.22px;font-size:12.5px;line-height:12.5px;font-weight:400;color:#000;">2024-03</div><div class="t n" style="right:552px;top:738.22px;font-size:12.5px;line-height:12.5px;font-weight:400;color:#000;text-align:right;">951,017</div><div class="t n" style="right:285px;top:738.22px;font-size:12.5px;line-height:12.5px;font-weight:400;color:#000;text-align:right;">22,161</div><div class="t n" style="right:195.5px;top:738.22px;font-size:12.5px;line-height:12.5px;font-weight:400;color:#000;text-align:right;">973,178</div><div class="t n" style="right:106.5px;top:738.22px;font-size:12.5px;line-height:12.5px;font-weight:400;color:#000;text-align:right;">-1,633</div><div class="t n" style="right:18px;top:738.22px;font-size:12.5px;line-height:12.5px;font-weight:400;color:#000;text-align:right;">2.33%</div><div style="position:absolute;left:365px;top:752px;width:713px;height:21px;background:#D9E1F2"></div><div style="position:absolute;left:365px;top:752px;width:713px;height:1px;background:#8EA9DB"></div><div class="t " style="left:368.5px;top:758.22px;font-size:12.5px;line-height:12.5px;font-weight:700;color:#000;">Grand Total</div><div class="t " style="right:552px;top:758.22px;font-size:12.5px;line-height:12.5px;font-weight:700;color:#000;text-align:right;">951,017</div><div class="t " style="right:285px;top:758.22px;font-size:12.5px;line-height:12.5px;font-weight:700;color:#000;text-align:right;">266,850</div><div class="t " style="right:195.5px;top:758.22px;font-size:12.5px;line-height:12.5px;font-weight:700;color:#000;text-align:right;">1,217,867</div><div class="t " style="right:106.5px;top:758.22px;font-size:12.5px;line-height:12.5px;font-weight:700;color:#000;text-align:right;">19,739</div><div class="t " style="right:18px;top:758.22px;font-size:12.5px;line-height:12.5px;font-weight:700;color:#000;text-align:right;">28.06%</div>
</body></html>
